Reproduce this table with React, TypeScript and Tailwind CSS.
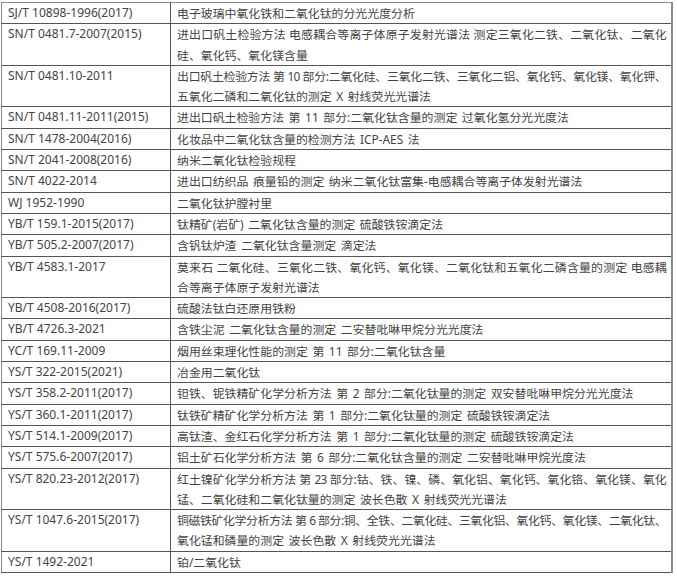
// each title is a list of lines as they break in the source table
const rows: [string, string[]][] = [
  ['SJ/T 10898-1996(2017)', ['电子玻璃中氧化铁和二氧化钛的分光光度分析']],
  ['SN/T 0481.7-2007(2015)', ['进出口矾土检验方法 电感耦合等离子体原子发射光谱法 测定三氧化二铁、二氧化钛、二氧化', '硅、氧化钙、氧化镁含量']],
  ['SN/T 0481.10-2011', ['出口矾土检验方法 第 10 部分:二氧化硅、三氧化二铁、三氧化二铝、氧化钙、氧化镁、氧化钾、', '五氧化二磷和二氧化钛的测定 X 射线荧光光谱法']],
  ['SN/T 0481.11-2011(2015)', ['进出口矾土检验方法 第 11 部分:二氧化钛含量的测定 过氧化氢分光光度法']],
  ['SN/T 1478-2004(2016)', ['化妆品中二氧化钛含量的检测方法 ICP-AES 法']],
  ['SN/T 2041-2008(2016)', ['纳米二氧化钛检验规程']],
  ['SN/T 4022-2014', ['进出口纺织品 痕量铅的测定 纳米二氧化钛富集-电感耦合等离子体发射光谱法']],
  ['WJ 1952-1990', ['二氧化钛护膛衬里']],
  ['YB/T 159.1-2015(2017)', ['钛精矿(岩矿) 二氧化钛含量的测定 硫酸铁铵滴定法']],
  ['YB/T 505.2-2007(2017)', ['含钒钛炉渣 二氧化钛含量测定 滴定法']],
  ['YB/T 4583.1-2017', ['莫来石 二氧化硅、三氧化二铁、氧化钙、氧化镁、二氧化钛和五氧化二磷含量的测定 电感耦', '合等离子体原子发射光谱法']],
  ['YB/T 4508-2016(2017)', ['硫酸法钛白还原用铁粉']],
  ['YB/T 4726.3-2021', ['含铁尘泥 二氧化钛含量的测定 二安替吡啉甲烷分光光度法']],
  ['YC/T 169.11-2009', ['烟用丝束理化性能的测定 第 11 部分:二氧化钛含量']],
  ['YS/T 322-2015(2021)', ['冶金用二氧化钛']],
  ['YS/T 358.2-2011(2017)', ['钽铁、铌铁精矿化学分析方法 第 2 部分:二氧化钛量的测定 双安替吡啉甲烷分光光度法']],
  ['YS/T 360.1-2011(2017)', ['钛铁矿精矿化学分析方法 第 1 部分:二氧化钛量的测定 硫酸铁铵滴定法']],
  ['YS/T 514.1-2009(2017)', ['高钛渣、金红石化学分析方法 第 1 部分:二氧化钛量的测定 硫酸铁铵滴定法']],
  ['YS/T 575.6-2007(2017)', ['铝土矿石化学分析方法 第 6 部分:二氧化钛含量的测定 二安替吡啉甲烷光度法']],
  ['YS/T 820.23-2012(2017)', ['红土镍矿化学分析方法 第 23 部分:钴、铁、镍、磷、氧化铝、氧化钙、氧化铬、氧化镁、氧化', '锰、二氧化硅和二氧化钛量的测定 波长色散 X 射线荧光光谱法']],
  ['YS/T 1047.6-2015(2017)', ['铜磁铁矿化学分析方法 第 6 部分:铜、全铁、二氧化硅、三氧化铝、氧化钙、氧化镁、二氧化钛、', '氧化锰和磷量的测定 波长色散 X 射线荧光光谱法']],
  ['YS/T 1492-2021', ['铂/二氧化钛']],
];

export default function App() {
  return (
    <div className="w-[677px] h-[576px] bg-white pl-px pt-[2px] font-[family-name:'Noto_Sans','Noto_Sans_CJK_SC',sans-serif] text-[#444]">
      <table className="w-[672px] border-collapse table-fixed border-l border-t border-b border-r-2 border-[#8a8a8a]">
        <colgroup>
          <col className="w-[169px]" />
          <col />
        </colgroup>
        <tbody>
          {rows.map(([code, lines]) => (
            <tr key={code} className="border-b border-[#555]">
              <td className="border-r border-[#555] px-[6px] py-0 text-[12px] leading-[20.3px] align-top whitespace-nowrap">
                {code}
              </td>
              <td className="pl-[6px] pr-[5px] py-0 text-[11.9px] leading-[20.3px] align-top [word-spacing:1.5px]">
                {lines.map((line, i) =>
                  i < lines.length - 1 ? (
                    <div key={i} className="text-justify [text-align-last:justify] tracking-[-0.7px] [word-spacing:0px]">
                      {line}
                    </div>
                  ) : (
                    <div key={i}>{line}</div>
                  )
                )}
              </td>
            </tr>
          ))}
        </tbody>
      </table>
    </div>
  );
}
